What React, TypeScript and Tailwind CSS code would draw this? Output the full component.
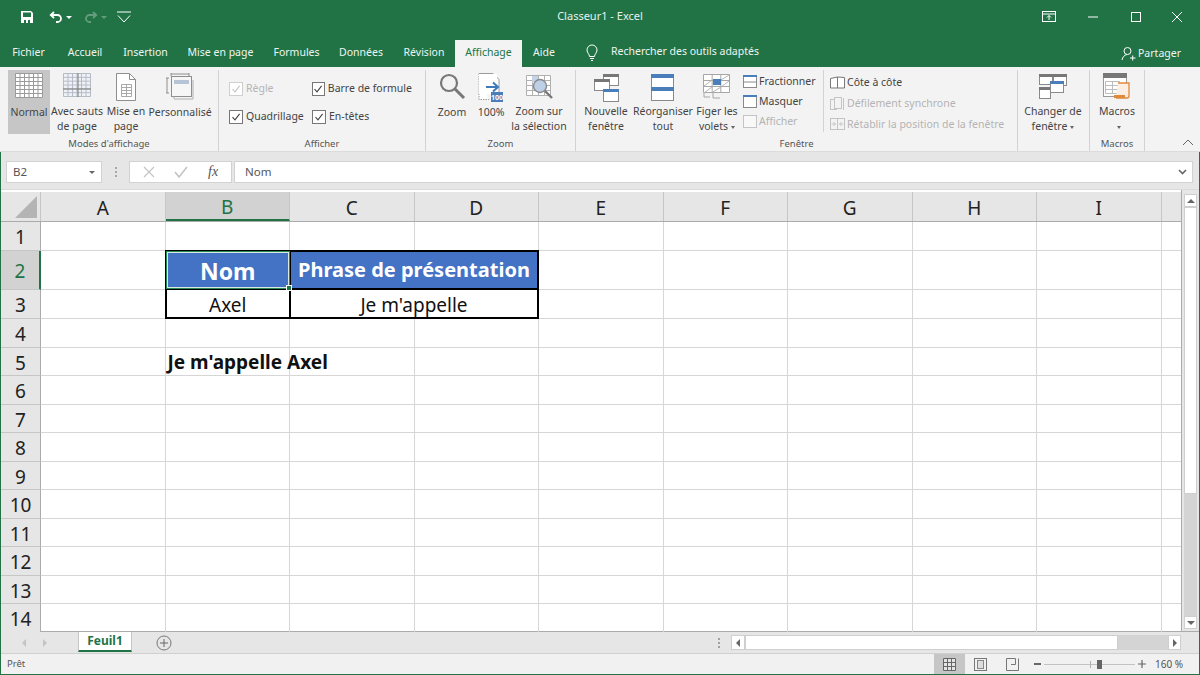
import type { ReactNode } from 'react';

const rowHeights = ['h-[29px]', 'h-[39px]', 'h-[29px]', 'h-[29px]', 'h-[28px]', 'h-[29px]', 'h-[28px]', 'h-[29px]', 'h-[28px]', 'h-[29px]', 'h-[28px]', 'h-[29px]', 'h-[28px]', 'h-[29px]'];
const columns = ['A', 'B', 'C', 'D', 'E', 'F', 'G', 'H', 'I'];

function Icon({ w, h, children }: { w: number; h: number; children: ReactNode }) {
  return (
    <svg width={w} height={h} viewBox={`0 0 ${w} ${h}`} fill="none" className="shrink-0">
      {children}
    </svg>
  );
}

function GridLines({ x, y, w, h, nx, ny, color }: { x: number; y: number; w: number; h: number; nx: number; ny: number; color: string }) {
  const xs = Array.from({ length: nx + 1 }, (_, i) => x + (w * i) / nx);
  const ys = Array.from({ length: ny + 1 }, (_, i) => y + (h * i) / ny);
  return (
    <g stroke={color} strokeWidth="1">
      {xs.map((v) => <line key={v} x1={v} y1={y} x2={v} y2={y + h} />)}
      {ys.map((v) => <line key={v} x1={x} y1={v} x2={x + w} y2={v} />)}
    </g>
  );
}

function SmallWindow({ x, y, w, h, bar = '#4a7ebb' }: { x: number; y: number; w: number; h: number; bar?: string }) {
  return (
    <g>
      <rect x={x + 0.5} y={y + 0.5} width={w} height={h} fill="#fff" stroke="#8a8a8a" />
      <rect x={x} y={y} width={w + 1} height="3" fill={bar} />
    </g>
  );
}

function Caret() {
  return <span className="inline-block align-middle ml-[3px] w-0 h-0 border-x-[2.5px] border-x-transparent border-t-[3px] border-t-[#666]" />;
}

function LargeButton({ lines, icon, className, active, caret }: { lines: string[]; icon: ReactNode; className: string; active?: boolean; caret?: boolean }) {
  return (
    <div className={`flex flex-col items-center h-[64px] pt-[3px] ${active ? 'bg-[#c6c6c6]' : ''} ${className}`}>
      <div className="h-[32px] flex items-start justify-center">{icon}</div>
      {lines.map((line, i) => (
        <span key={line} className="text-[10.5px] leading-[15px] whitespace-nowrap text-[#444]">
          {line}
          {caret && i === lines.length - 1 && <Caret />}
        </span>
      ))}
    </div>
  );
}

function Group({ label, className, children }: { label: string; className: string; children: ReactNode }) {
  return (
    <div className={`relative flex flex-col h-full border-r border-[#d2d2d2] ${className}`}>
      <div className="h-[67px] flex items-start">{children}</div>
      <div className="text-[9.5px] leading-[14px] text-center text-[#555]">{label}</div>
    </div>
  );
}

function Check({ label, disabled }: { label: string; disabled?: boolean }) {
  return (
    <div className={`flex items-center gap-[2px] h-[28px] text-[10.5px] ${disabled ? 'text-[#b4b4b4]' : 'text-[#444]'}`}>
      <span className={`w-[14px] h-[14px] border bg-white flex items-center justify-center ${disabled ? 'border-[#cfcfcf]' : 'border-[#777]'}`}>
        <svg width="10" height="10" viewBox="0 0 10 10" fill="none">
          <path d="M1.500 5.200 4 7.800 8.600 1.800" stroke={disabled ? '#c4c4c4' : '#444'} strokeWidth="1.100" />
        </svg>
      </span>
      <span className="ml-[1px] whitespace-nowrap">{label}</span>
    </div>
  );
}

function SmallRow({ icon, label, disabled }: { icon: ReactNode; label: string; disabled?: boolean }) {
  return (
    <div className={`flex items-center h-[21px] gap-[2px] text-[10.5px] whitespace-nowrap ${disabled ? 'text-[#b4b4b4]' : 'text-[#444]'}`}>
      {icon}
      <span>{label}</span>
    </div>
  );
}

function TitleBar() {
  return (
    <div className="relative flex items-center h-[33px] bg-[#217346] text-white">
      <div className="flex items-center pl-[20px] pt-[1px]">
        <Icon w={14} h={14}>
          <path d="M1 1h10l2 2v10H1z" fill="#fff" />
          <rect x="3" y="2.500" width="8" height="4.500" fill="#217346" />
          <rect x="4" y="10" width="2" height="3" fill="#217346" />
          <rect x="8" y="10" width="2" height="3" fill="#217346" />
        </Icon>
        <div className="ml-[15px]">
          <Icon w={14} h={14}>
            <path d="M5 2 1.800 5 5 8" stroke="#fff" strokeWidth="1.800" />
            <path d="M2 5h6.500a3.400 3.400 0 0 1 0 7H7" stroke="#fff" strokeWidth="1.800" />
          </Icon>
        </div>
        <div className="ml-[3px] w-0 h-0 border-x-[3px] border-x-transparent border-t-[3px] border-t-white" />
        <div className="ml-[12px] opacity-30">
          <Icon w={14} h={14}>
            <path d="M9 2 12.200 5 9 8" stroke="#fff" strokeWidth="1.800" />
            <path d="M12 5H5.500a3.400 3.400 0 0 0 0 7H7" stroke="#fff" strokeWidth="1.800" />
          </Icon>
        </div>
        <div className="ml-[3px] w-0 h-0 border-x-[3px] border-x-transparent border-t-[3px] border-t-white opacity-30" />
        <div className="ml-[9px]">
          <Icon w={16} h={14}>
            <path d="M1 2h14" stroke="#fff" strokeWidth="1" />
            <path d="M2 5.500 8 12l6-6.500" stroke="#fff" strokeWidth="1" />
          </Icon>
        </div>
      </div>
      <div className="absolute left-0 right-0 text-center text-[11px] text-[#e8f1ec] pointer-events-none">Classeur1 - Excel</div>
      <div className="ml-auto flex items-center pr-[17px] gap-[29px]">
        <Icon w={14} h={12}>
          <rect x="0.500" y="0.500" width="13" height="10" stroke="#fff" />
          <path d="M0 3h14" stroke="#fff" />
          <path d="M7 9V4.500M5 6.500l2-2 2 2" stroke="#fff" />
        </Icon>
        <Icon w={16} h={12}><path d="M3 6h10" stroke="#fff" /></Icon>
        <Icon w={12} h={12}><rect x="1.500" y="1.500" width="9" height="9" stroke="#fff" /></Icon>
        <Icon w={12} h={12}><path d="M1 1l10 10M11 1 1 11" stroke="#fff" /></Icon>
      </div>
    </div>
  );
}

const tabs = [
  { label: 'Fichier', cls: 'w-[55px]' },
  { label: 'Accueil', cls: 'w-[58px]' },
  { label: 'Insertion', cls: 'w-[63px]' },
  { label: 'Mise en page', cls: 'w-[87px]' },
  { label: 'Formules', cls: 'w-[65px]' },
  { label: 'Données', cls: 'w-[64px]' },
  { label: 'Révision', cls: 'w-[62px]' },
];

function TabsBar() {
  return (
    <div className="flex h-[34px] bg-[#217346] text-[10.5px] text-[#eef5f1] pt-[7px]">
      <div className="w-[1px]" />
      {tabs.map((t) => (
        <div key={t.label} className={`${t.cls} text-center leading-[24px] whitespace-nowrap`}>{t.label}</div>
      ))}
      <div className="w-[67px] bg-[#f3f3f3] text-[#217346] text-center leading-[24px]">Affichage</div>
      <div className="w-[44px] text-center leading-[24px]">Aide</div>
      <div className="ml-[19px] flex items-center h-[24px]">
        <Icon w={14} h={17}>
          <path d="M4.500 12.500C4.500 10 2 9 2 6a5 5 0 0 1 10 0c0 3-2.500 4-2.500 6.500z" stroke="#fff" />
          <path d="M5 14.500h4M6 16.500h2" stroke="#fff" />
        </Icon>
        <span className="ml-[12px] whitespace-nowrap">Rechercher des outils adaptés</span>
      </div>
      <div className="ml-auto flex items-center h-[27px] pr-[19px]">
        <Icon w={15} h={15}>
          <circle cx="6.500" cy="5" r="3.500" stroke="#fff" />
          <path d="M1 14c.5-3 2.500-5 5-5.500M9 12h5.500M11.700 9.500v5" stroke="#fff" />
        </Icon>
        <span className="ml-[2px]">Partager</span>
      </div>
    </div>
  );
}

function Ribbon() {
  return (
    <div className="relative flex h-[85px] pt-[3px] bg-[#f3f3f3] border-b border-[#dcdcdc]">
      <Group label="Modes d'affichage" className="w-[219px]">
        <div className="w-[8px]" />
        <LargeButton
          active
          lines={['Normal']}
          className="w-[42px]"
          icon={
            <Icon w={28} h={26}>
              <rect x="0.500" y="0.500" width="27" height="24" fill="#fff" />
              <GridLines x={0.5} y={0.5} w={27} h={24} nx={6} ny={6} color="#9a9a9a" />
            </Icon>
          }
        />
        <LargeButton
          lines={['Avec sauts', 'de page']}
          className="w-[54px]"
          icon={
            <Icon w={28} h={26}>
              <rect x="0.500" y="0.500" width="27" height="23" fill="#eef1f6" />
              <GridLines x={0.5} y={0.5} w={27} h={23} nx={6} ny={6} color="#b6bcc6" />
              <path d="M15 0v24M0 16h28" stroke="#7b7b7b" />
            </Icon>
          }
        />
        <LargeButton
          lines={['Mise en', 'page']}
          className="w-[44px]"
          icon={
            <Icon w={20} h={28}>
              <path d="M.5 .5h13l6 6v21H.5z" fill="#fff" stroke="#8e8e8e" />
              <path d="M13.500 .5v6h6" stroke="#8e8e8e" />
              <GridLines x={5.5} y={11.5} w={10} h={12} nx={2} ny={4} color="#a8a8a8" />
            </Icon>
          }
        />
        <LargeButton
          lines={['Personnalisé']}
          className="w-[64px]"
          icon={
            <Icon w={28} h={27}>
              <path d="M1 5v15M0 5h3M0 20h3M5 1h18M5 0v3M23 0v3" stroke="#8e8e8e" />
              <rect x="5.500" y="3.500" width="20" height="20" fill="#f6f6f6" stroke="#8e8e8e" />
              <rect x="8" y="7" width="15" height="4" fill="#b7c4d8" />
              <path d="M8 23.500v2.500h19V7" stroke="#b0b0b0" />
            </Icon>
          }
        />
      </Group>
      <Group label="Afficher" className="w-[207px]">
        <div className="grid grid-cols-[83px_100px] pl-[10px] pt-[5px]">
          <Check disabled label="Règle" />
          <Check label="Barre de formule" />
          <Check label="Quadrillage" />
          <Check label="En-têtes" />
        </div>
      </Group>
      <Group label="Zoom" className="w-[150px]">
        <div className="w-[10px]" />
        <LargeButton
          lines={['Zoom']}
          className="w-[32px]"
          icon={
            <Icon w={28} h={28}>
              <circle cx="11" cy="10" r="8" stroke="#777" strokeWidth="2.200" />
              <path d="M17 16l9 9" stroke="#777" strokeWidth="3" />
            </Icon>
          }
        />
        <div className="w-[8px]" />
        <LargeButton
          lines={['100%']}
          className="w-[30px]"
          icon={
            <Icon w={26} h={29}>
              <path d="M1 .5h14l6 6v14" fill="#fff" stroke="#9a9a9a" />
              <path d="M1 .5v26h10" fill="#fff" stroke="#9a9a9a" strokeDasharray="1.500 1" />
              <rect x="1" y="1" width="18" height="20" fill="#fff" />
              <path d="M8 14h11M15 9.500l5 4.500-5 4.500" stroke="#3f79b8" strokeWidth="2" />
              <rect x="13" y="19" width="12" height="10" fill="#4a7ebb" />
              <text x="19" y="27" fontSize="7" fontWeight="700" textAnchor="middle" fill="#fff" fontFamily="Noto Sans">100</text>
            </Icon>
          }
        />
        <div className="w-[3px]" />
        <LargeButton
          lines={['Zoom sur', 'la sélection']}
          className="w-[60px]"
          icon={
            <Icon w={28} h={28}>
              <rect x="1.500" y="2.500" width="24" height="20" fill="#fff" />
              <GridLines x={1.5} y={2.5} w={24} h={20} nx={4} ny={4} color="#b0b0b0" />
              <rect x="7" y="3" width="6" height="6" fill="#c4d3e8" />
              <circle cx="15" cy="13" r="6.500" fill="#bdd0e8" stroke="#8a8a8a" strokeWidth="1.400" />
              <path d="M20 18l7 7" stroke="#777" strokeWidth="2.400" />
            </Icon>
          }
        />
      </Group>
      <Group label="Fenêtre" className="w-[442px]">
        <div className="w-[6px]" />
        <LargeButton
          lines={['Nouvelle', 'fenêtre']}
          className="w-[48px]"
          icon={
            <Icon w={26} h={29}>
              <SmallWindow x={10} y={1} w={15} h={11} bar="#777" />
              <SmallWindow x={1} y={6} w={15} h={11} bar="#777" />
              <SmallWindow x={10} y={16} w={15} h={12} />
            </Icon>
          }
        />
        <div className="w-[3px]" />
        <LargeButton
          lines={['Réorganiser', 'tout']}
          className="w-[60px]"
          icon={
            <Icon w={24} h={30}>
              <rect x="0.500" y="1.500" width="22" height="26" fill="#fff" stroke="#8a8a8a" />
              <rect x="0" y="1" width="23" height="4" fill="#4a7ebb" />
              <rect x="0" y="14" width="23" height="4" fill="#4a7ebb" />
            </Icon>
          }
        />
        <div className="w-[2px]" />
        <LargeButton
          caret
          lines={['Figer les', 'volets']}
          className="w-[44px]"
          icon={
            <Icon w={28} h={27}>
              <rect x="0.500" y="1.500" width="26" height="18" fill="#fff" />
              <GridLines x={0.5} y={1.5} w={26} h={18} nx={3} ny={3} color="#a6a6a6" />
              <path d="M1 20l8-6M1 13l8-6M18 7l8-5M18 14l8-6M10 19l8-5" stroke="#b4b4b4" />
              <rect x="10" y="6" width="8" height="6" fill="#4a7ebb" />
              <path d="M1 20v4h6M10 20v5h7" stroke="#a6a6a6" />
            </Icon>
          }
        />
        <div className="w-[4px]" />
        <div className="flex flex-col w-[81px] pt-[2px] border-r border-[#d2d2d2] h-[62px]">
          <SmallRow label="Fractionner" icon={<Icon w={14} h={14}><rect x="0.500" y="0.500" width="13" height="12" fill="#fff" stroke="#8a8a8a" /><rect width="14" height="2" fill="#4a7ebb" /><path d="M0 7h14" stroke="#8a8a8a" /></Icon>} />
          <SmallRow label="Masquer" icon={<Icon w={14} h={14}><rect x="0.500" y="0.500" width="13" height="12" fill="#fff" stroke="#8a8a8a" /><rect width="14" height="2" fill="#4a7ebb" /></Icon>} />
          <SmallRow disabled label="Afficher" icon={<Icon w={14} h={14}><rect x="0.500" y="0.500" width="13" height="12" fill="#f8f8f8" stroke="#c4c4c4" /></Icon>} />
        </div>
        <div className="flex flex-col pl-[6px] pt-[2px]">
          <SmallRow label="Côte à côte" icon={<Icon w={15} h={13}><path d="M.5 2.500 7.500 1v11H.5zM7.500 1l7 .5v10.500h-7" fill="#fff" stroke="#777" /></Icon>} />
          <SmallRow disabled label="Défilement synchrone" icon={<Icon w={15} h={14}><rect x="0.500" y="2.500" width="6" height="10" stroke="#c4c4c4" /><rect x="4.500" y="0.500" width="7" height="11" fill="#f3f3f3" stroke="#c4c4c4" /><path d="M13.500 1v12" stroke="#c4c4c4" /></Icon>} />
          <SmallRow disabled label="Rétablir la position de la fenêtre" icon={<Icon w={15} h={13}><rect x="0.500" y="0.500" width="14" height="11" stroke="#c4c4c4" /><path d="M7.500 0v12M1.500 6h4M3.500 4l2 2-2 2M13.500 6h-4M11.500 4l-2 2 2 2" stroke="#c4c4c4" /></Icon>} />
        </div>
      </Group>
      <Group label="" className="w-[72px]">
        <LargeButton
          caret
          lines={['Changer de', 'fenêtre']}
          className="w-[70px]"
          icon={
            <Icon w={28} h={28}>
              <SmallWindow x={0} y={1} w={13} h={10} bar="#777" />
              <SmallWindow x={14} y={1} w={13} h={11} bar="#777" />
              <SmallWindow x={0} y={14} w={11} h={11} bar="#777" />
              <SmallWindow x={11} y={8} w={13} h={11} />
            </Icon>
          }
        />
      </Group>
      <Group label="Macros" className="w-[55px]">
        <LargeButton
          caret
          lines={['Macros', '']}
          className="w-[54px]"
          icon={
            <Icon w={28} h={28}>
              <rect x="0.500" y="0.500" width="23" height="23" fill="#fff" stroke="#9a9a9a" />
              <rect width="24" height="5" fill="#777" />
              <GridLines x={2.5} y={8.5} w={14} h={12} nx={2} ny={3} color="#bcbcbc" />
              <path d="M15 10h11v13a2 2 0 0 1-2 2H13" fill="#fbeee2" stroke="#e08a3c" strokeWidth="1.300" />
              <path d="M11 25h11v-3H11z" fill="#e08a3c" />
            </Icon>
          }
        />
      </Group>
      <div className="absolute right-[6px] bottom-[5px]">
        <Icon w={12} h={7}><path d="M1 6l5-5 5 5" stroke="#666" /></Icon>
      </div>
    </div>
  );
}

function FormulaBar() {
  return (
    <div className="flex items-start h-[38px] pt-[9px] pl-[5px] pr-[6px] bg-[#e6e6e6] border-b border-[#dadada] text-[#555]">
      <div className="flex items-center justify-between w-[96px] h-[22px] pl-[6px] pr-[6px] bg-white border border-[#d2d2d2] text-[11.5px]">
        <span>B2</span>
        <div className="w-0 h-0 border-x-[3px] border-x-transparent border-t-[3px] border-t-[#666]" />
      </div>
      <div className="w-[27px] h-[22px] flex flex-col items-center justify-center gap-[2px]">
        <span className="w-[2px] h-[2px] bg-[#a8a8a8]" />
        <span className="w-[2px] h-[2px] bg-[#a8a8a8]" />
        <span className="w-[2px] h-[2px] bg-[#a8a8a8]" />
      </div>
      <div className="flex items-center justify-around w-[103px] h-[22px] px-[3px] bg-white border border-[#d2d2d2]">
        <Icon w={12} h={12}><path d="M1 1l10 10M11 1 1 11" stroke="#c4c4c4" strokeWidth="1.200" /></Icon>
        <Icon w={14} h={12}><path d="M1 6l4 5 8-10" stroke="#c4c4c4" strokeWidth="1.600" /></Icon>
        <span className="font-['Liberation_Serif',serif] italic text-[14px] leading-none text-[#555]">fx</span>
      </div>
      <div className="flex items-center justify-between flex-1 h-[22px] ml-[2px] pl-[10px] pr-[5px] bg-white border border-[#d2d2d2] text-[11.5px]">
        <span>Nom</span>
        <Icon w={9} h={6}><path d="M1 1l3.500 3.500L8 1" stroke="#666" strokeWidth="1.600" /></Icon>
      </div>
    </div>
  );
}

function ColumnHeader() {
  return (
    <div className="flex h-[30px] mt-[2px] bg-[#e6e6e6] border-b border-[#ababab] text-[19px] text-[#222] shrink-0">
      <div className="relative w-[40px] shrink-0 border-r border-[#c6c6c6]">
        <div className="absolute right-[3px] bottom-[3px] w-0 h-0 border-l-[22px] border-l-transparent border-b-[22px] border-b-[#b4b4b4]" />
      </div>
      {columns.map((c) => (
        <div
          key={c}
          className={`w-[124.5px] shrink-0 flex items-center justify-center pt-[4px] border-r border-[#c6c6c6] ${c === 'B' ? 'bg-[#d2d2d2] text-[#217346] border-b-2 border-b-[#217346]' : ''}`}
        >
          {c}
        </div>
      ))}
      <div className="flex-1" />
    </div>
  );
}

function Cell({ children }: { children?: ReactNode }) {
  return <div className="w-[124.5px] shrink-0 border-r border-b border-[#d6d6d6]">{children}</div>;
}

function Row({ n, height, children }: { n: number; height: string; children: ReactNode }) {
  return (
    <div className={`flex ${height}`}>
      <div
        className={`w-[40px] shrink-0 flex items-center justify-center pt-[3px] text-[19px] border-b border-[#c6c6c6] ${n === 2 ? 'bg-[#d2d2d2] text-[#217346] border-r-2 border-r-[#217346]' : 'bg-[#e6e6e6] text-[#222] border-r border-r-[#ababab]'}`}
      >
        {n}
      </div>
      {children}
      <div className="flex-1 border-b border-[#d6d6d6]" />
    </div>
  );
}

function VerticalScrollbar() {
  return (
    <div className="flex flex-col flex-1 pl-[2px] pr-[2px] pt-[4px] pb-[2px] bg-[#e6e6e6] border-l border-[#ababab]">
      <div className="h-[13px] bg-white border border-[#cfcfcf] flex items-center justify-center">
        <div className="w-0 h-0 border-x-[4px] border-x-transparent border-b-[4px] border-b-[#666]" />
      </div>
      <div className="h-[287px] bg-white border border-[#cfcfcf]" />
      <div className="flex-1 bg-[#d4d4d4]" />
      <div className="h-[13px] bg-white border border-[#cfcfcf] flex items-center justify-center">
        <div className="w-0 h-0 border-x-[4px] border-x-transparent border-t-[4px] border-t-[#666]" />
      </div>
    </div>
  );
}

function Sheet() {
  return (
    <div className="flex h-[442px] shrink-0 border-b border-[#ababab] bg-white">
      <div className="w-[1180px] shrink-0 flex flex-col">
        <ColumnHeader />
        {rowHeights.map((height, i) => {
          const n = i + 1;
          const rest = n === 2 || n === 3 ? columns.slice(4) : columns.slice(1);
          return (
            <Row key={n} n={n} height={height}>
              <Cell />
              {n === 2 && (
                <>
                  <div className="relative w-[124.5px] -ml-[1px] -mt-[1px] pt-[2px] shrink-0 flex items-center justify-center bg-[#4472c4] border-2 border-r-0 border-black text-white font-bold text-[23px]">
                    Nom
                    <div className="absolute -left-[1px] -top-[1px] -right-[1px] -bottom-[1px] border border-[#2a8a56]">
                      <div className="w-full h-full border border-[#d8ebe0]" />
                    </div>
                    <div className="absolute -right-[3px] -bottom-[3px] w-[6px] h-[6px] bg-[#217346] border border-white" />
                  </div>
                  <div className="w-[250px] -mt-[1px] shrink-0 flex items-center justify-center bg-[#4472c4] border-2 border-black text-white font-bold text-[20px] whitespace-nowrap">
                    Phrase de présentation
                  </div>
                </>
              )}
              {n === 3 && (
                <>
                  <div className="w-[124.5px] -ml-[1px] pt-[3px] shrink-0 flex items-center justify-center border-b-2 border-l-2 border-black text-[19px] text-[#111]">Axel</div>
                  <div className="w-[250px] pt-[3px] shrink-0 flex items-center justify-center border-2 border-t-0 border-black text-[19px] text-[#111]">Je m'appelle</div>
                </>
              )}
              {rest.map((c) => (
                <Cell key={c}>
                  {n === 5 && c === 'B' && (
                    <div className="flex items-center h-full pl-[2px] pt-[2px] whitespace-nowrap font-bold text-[19px] text-[#111]">Je m'appelle Axel</div>
                  )}
                </Cell>
              ))}
            </Row>
          );
        })}
      </div>
      <VerticalScrollbar />
    </div>
  );
}

function SheetTabs() {
  return (
    <div className="flex items-center h-[22px] shrink-0 bg-[#e6e6e6] border-b border-[#d0d0d0]">
      <div className="w-[21px]" />
      <div className="w-0 h-0 border-y-[4px] border-y-transparent border-r-[4px] border-r-[#c4c4c4]" />
      <div className="w-[17px]" />
      <div className="w-0 h-0 border-y-[4px] border-y-transparent border-l-[4px] border-l-[#c4c4c4]" />
      <div className="w-[31px]" />
      <div className="w-[54px] h-[20px] -mt-[1px] bg-white border-x border-[#c6c6c6] border-b-2 border-b-[#217346] text-center text-[12px] leading-[18px] font-bold text-[#217346]">
        Feuil1
      </div>
      <div className="ml-[24px]">
        <Icon w={16} h={16}>
          <circle cx="8" cy="8" r="7" stroke="#777" />
          <path d="M4 8h8M8 4v8" stroke="#666" />
        </Icon>
      </div>
      <div className="ml-[546px] flex flex-col gap-[2px]">
        <span className="w-[2px] h-[2px] bg-[#a0a0a0]" />
        <span className="w-[2px] h-[2px] bg-[#a0a0a0]" />
        <span className="w-[2px] h-[2px] bg-[#a0a0a0]" />
      </div>
      <div className="ml-[11px] flex items-center w-[450px] h-[15px]">
        <div className="w-[14px] h-full bg-white border border-[#cfcfcf] flex items-center justify-center">
          <div className="w-0 h-0 border-y-[4px] border-y-transparent border-r-[4px] border-r-[#666]" />
        </div>
        <div className="w-[373px] h-full bg-white border border-[#cfcfcf]" />
        <div className="flex-1 h-full bg-[#d4d4d4]" />
        <div className="w-[13px] h-full bg-white border border-[#cfcfcf] flex items-center justify-center">
          <div className="w-0 h-0 border-y-[4px] border-y-transparent border-l-[4px] border-l-[#666]" />
        </div>
      </div>
    </div>
  );
}

function StatusBar() {
  return (
    <div className="flex items-stretch flex-1 bg-[#f1f1f1] text-[#555]">
      <div className="pl-[6px] flex items-center text-[9.5px]">Prêt</div>
      <div className="ml-auto flex items-center text-[10px]">
        <div className="w-[31px] h-full bg-[#c6c6c6] flex items-center justify-center">
          <Icon w={13} h={13}>
            <rect x="0.500" y="0.500" width="12" height="12" fill="#e4e4e4" />
            <GridLines x={0.5} y={0.5} w={12} h={12} nx={3} ny={3} color="#666" />
          </Icon>
        </div>
        <div className="w-[31px] flex items-center justify-center">
          <Icon w={13} h={13}>
            <rect x="0.500" y="0.500" width="12" height="12" stroke="#777" />
            <rect x="3.500" y="2.500" width="6" height="8" stroke="#888" fill="#ddd" />
          </Icon>
        </div>
        <div className="w-[32px] flex items-center justify-center">
          <Icon w={13} h={13}>
            <path d="M.5 .5v12h12V.5M.5 .5h9v6H5" stroke="#777" />
          </Icon>
        </div>
        <div className="flex items-center w-[112px] ml-[6px]">
          <span className="w-[7px] h-[2px] bg-[#666]" />
          <div className="relative flex-1 mx-[3px] h-[1px] bg-[#c2c2c2]">
            <span className="absolute left-[46px] -top-[3px] w-[1px] h-[7px] bg-[#b0b0b0]" />
            <span className="absolute left-[53px] -top-[4px] w-[5px] h-[9px] bg-[#666]" />
          </div>
          <Icon w={8} h={8}><path d="M0 4h8M4 0v8" stroke="#666" strokeWidth="1.200" /></Icon>
        </div>
        <span className="ml-[9px] w-[44px] whitespace-nowrap">160 %</span>
      </div>
    </div>
  );
}

export default function App() {
  return (
    <div className="w-[1200px] h-[675px] overflow-hidden flex flex-col bg-[#217346] font-['Noto_Sans',sans-serif]">
      <TitleBar />
      <TabsBar />
      <Ribbon />
      <div className="flex flex-col flex-1 min-h-0 mx-[1px] mb-[1px]">
        <FormulaBar />
        <Sheet />
        <SheetTabs />
        <StatusBar />
      </div>
    </div>
  );
}
